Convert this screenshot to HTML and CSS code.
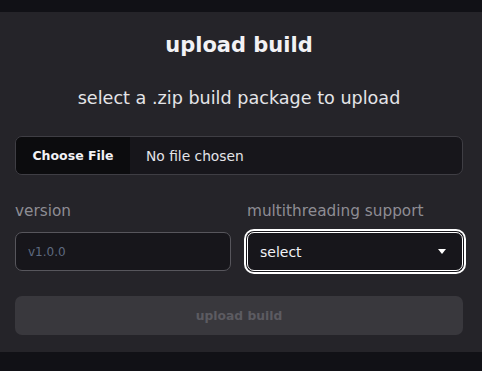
FILE: index.html
```html
<!DOCTYPE html>
<html>
<head>
<meta charset="utf-8">
<link rel="stylesheet" href="styles.css">
</head>
<body>
<div class="topbar"></div>
<main class="panel">
  <h1 class="title">upload build</h1>
  <p class="subtitle">select a .zip build package to upload</p>
  <div class="file">
    <span class="file-btn">Choose File</span>
    <span class="file-name">No file chosen</span>
  </div>
  <div class="row">
    <div class="field">
      <label class="label">version</label>
      <div class="input"><span class="placeholder">v1.0.0</span></div>
    </div>
    <div class="field">
      <label class="label">multithreading support</label>
      <div class="select">
        <span>select</span>
        <svg class="caret" width="8" height="5" viewBox="0 0 8 5"><path d="M0 0H8L4 5Z" fill="#fff"/></svg>
      </div>
    </div>
  </div>
  <div class="submit">upload build</div>
</main>
<div class="bottombar"></div>
</body>
</html>
```
FILE: styles.css
```css
html, body { margin: 0; padding: 0; }
body {
  background: #111116;
  font-family: "DejaVu Sans", sans-serif;
  color: #e8e8ec;
  width: 482px;
  height: 371px;
  overflow: hidden;
}
.topbar { height: 12px; background: #111116; }
.bottombar { height: 19px; background: #111116; }
.panel {
  background: #252429;
  height: 340px;
  box-sizing: border-box;
  padding: 20px 19px 0 15px;
  display: flex;
  flex-direction: column;
}
.title {
  margin: 0;
  text-align: center;
  font-size: 21px;
  font-weight: 700;
  line-height: 26px;
  color: #f2f2f5;
}
.subtitle {
  margin: 28px 0 0;
  text-align: center;
  font-size: 17.6px;
  line-height: 24px;
  color: #e4e4e8;
}
.file {
  margin-top: 26px;
  height: 39px;
  box-sizing: border-box;
  border: 1px solid #3f3e44;
  border-radius: 7px;
  background: #17161b;
  display: flex;
  overflow: hidden;
}
.file-btn {
  width: 114px;
  background: #0c0c0e;
  font-weight: 700;
  font-size: 12.5px;
  display: flex;
  align-items: center;
  justify-content: center;
  color: #f2f2f5;
}
.file-name {
  display: flex;
  align-items: center;
  padding-left: 16px;
  font-size: 13.8px;
  color: #e4e4e8;
}
.row {
  margin-top: 26px;
  display: grid;
  grid-template-columns: 216px 219px;
  gap: 13px;
}
.field { display: flex; flex-direction: column; }
.label {
  font-size: 15.3px;
  line-height: 20px;
  color: #8e8d94;
  margin-bottom: 11px;
}
.label-right { padding-left: 3px; }
.input {
  height: 39px;
  box-sizing: border-box;
  border: 1px solid #57565c;
  border-radius: 7px;
  background: #17161b;
  display: flex;
  align-items: center;
  padding-left: 12px;
  font-size: 12px;
}
.placeholder { color: #5e6a80; }
.select {
  height: 39px;
  box-sizing: border-box;
  border: 1px solid #ffffff;
  border-radius: 7px;
  background: #17161b;
  box-shadow: 0 0 0 1px #17161b, 0 0 0 3px #ffffff;
  margin-left: 3px;
  display: flex;
  align-items: center;
  justify-content: space-between;
  padding: 0 16px 0 12px;
  font-size: 14px;
  color: #f2f2f5;
}
.field + .field .label { padding-left: 3px; }
.caret { display: block; }
.submit {
  margin-top: 25px;
  height: 39px;
  border-radius: 7px;
  background: #39383d;
  display: flex;
  align-items: center;
  justify-content: center;
  font-size: 12.3px;
  font-weight: 700;
  color: #5c5b61;
}
```
